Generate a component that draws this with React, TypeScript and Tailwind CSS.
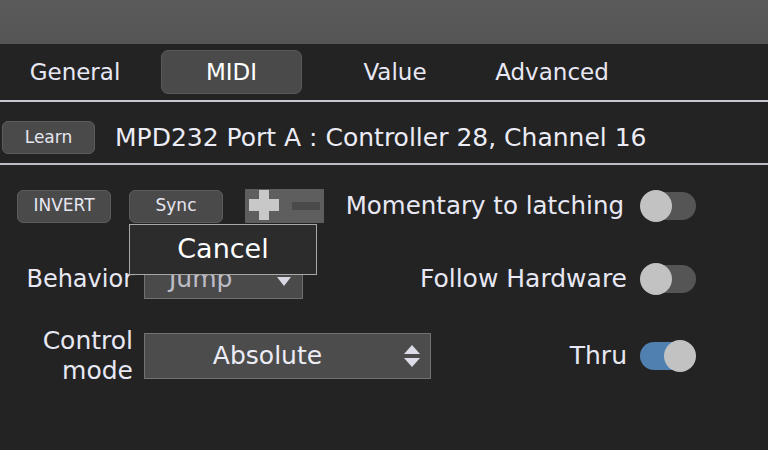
import React from "react";

const font = { fontFamily: '"DejaVu Sans", "Liberation Sans", sans-serif' };

function Toggle({ on }: { on?: boolean }) {
  return (
    <div className="relative w-[56px] h-[32px] shrink-0">
      <div
        className={`absolute top-[2px] h-[28px] w-[48px] rounded-full ${
          on ? "left-0 bg-[#4f80b0]" : "left-[8px] bg-[#555555]"
        }`}
      />
      <div
        className={`absolute top-0 h-[32px] w-[32px] rounded-full bg-[#c2c2c2] ${
          on ? "left-[24px]" : "left-0"
        }`}
      />
    </div>
  );
}

function SmallButton({ label, className = "" }: { label: string; className?: string }) {
  return (
    <div
      className={`flex items-center justify-center h-[33px] rounded-[6px] bg-[#4a4a4a] border border-[#5c5c5c] text-[17px] text-[#e6e6f0] ${className}`}
    >
      {label}
    </div>
  );
}

export default function App() {
  return (
    <div className="w-[768px] h-[450px] overflow-hidden bg-[#232323] relative" style={font}>
      {/* top bar */}
      <div className="h-[44px] bg-gradient-to-b from-[#5a5a5a] to-[#555555]" />

      {/* tabs */}
      <div className="h-[56px] flex items-center text-[23px] text-[#e8e8f4]">
        <div className="w-[150px] text-center">General</div>
        <div className="ml-[11px] w-[141px] h-[44px] flex items-center justify-center rounded-[7px] bg-[#4a4a4a] border border-[#585858] text-white">
          MIDI
        </div>
        <div className="ml-[33px] w-[120px] text-center">Value</div>
        <div className="ml-[27px] w-[140px] text-center">Advanced</div>
      </div>
      <div className="h-[2px] bg-[#c8c8d2]" />

      {/* source row */}
      <div className="h-[61px] flex items-center pl-[2px] pt-[10px]">
        <SmallButton label="Learn" className="w-[93px]" />
        <div className="ml-[20px] text-[25px] text-[#ececf6] whitespace-nowrap">
          MPD232 Port A : Controller 28, Channel 16
        </div>
      </div>
      <div className="h-[2px] bg-[#bdbdc4]" />

      {/* options */}
      <div className="flex items-center mt-[24px] h-[34px]">
        <div className="flex items-center pl-[17px] gap-[18px]">
          <SmallButton label="INVERT" className="w-[94px]" />
          <SmallButton label="Sync" className="w-[94px]" />
          <div className="ml-[4px] w-[79px] h-[34px] bg-[#5e5e5e] relative">
            <div className="absolute left-[4px] top-[10px] w-[30px] h-[12px] bg-[#c8c8c8]" />
            <div className="absolute left-[14px] top-[1px] w-[10px] h-[30px] bg-[#c8c8c8]" />
            <div className="absolute left-[47px] top-[13px] w-[28px] h-[8px] bg-[#4a4a4a]" />
          </div>
        </div>
        <div className="flex-1 flex items-center justify-end pr-[72px] gap-[16px]">
          <span className="text-[24.5px] text-[#e8e8f4] whitespace-nowrap">Momentary to latching</span>
          <Toggle />
        </div>
      </div>

      <div className="flex items-center mt-[36px] h-[40px]">
        <div className="w-[133px] text-right text-[24px] text-[#e8e8f4] whitespace-nowrap">Behavior</div>
        <div className="ml-[11px] w-[159px] h-[40px] bg-[#4a4a4a] border border-[#707070] relative flex items-center">
          <span className="ml-[24px] text-[25px] text-[#bdbdc8]">Jump</span>
          <svg className="absolute right-[11px] top-[17px]" width="14" height="9" viewBox="0 0 14 9">
            <path d="M0 0 H14 L7 9 Z" fill="#d8d8e4" />
          </svg>
        </div>
        <div className="flex-1 flex items-center justify-end pr-[72px] gap-[13px]">
          <span className="text-[25px] text-[#e8e8f4] whitespace-nowrap">Follow Hardware</span>
          <Toggle />
        </div>
      </div>

      <div className="flex items-center mt-[31px] h-[52px]">
        <div className="w-[133px] text-right text-[25px] leading-[30px] text-[#e8e8f4]">
          Control
          <br />
          mode
        </div>
        <div className="ml-[11px] w-[287px] h-[46px] bg-[#4c4c4c] border border-[#727272] relative flex items-center justify-center">
          <span className="text-[25px] text-[#ececf6] -ml-[40px]">Absolute</span>
          <svg className="absolute right-[10px] top-[11px]" width="16" height="22" viewBox="0 0 16 22">
            <path d="M8 0 L16 9 H0 Z" fill="#dcdce8" />
            <path d="M0 13 H16 L8 22 Z" fill="#dcdce8" />
          </svg>
        </div>
        <div className="flex-1 flex items-center justify-end pr-[72px] gap-[13px]">
          <span className="text-[25px] text-[#e8e8f4]">Thru</span>
          <Toggle on />
        </div>
      </div>

      {/* popup */}
      <div className="absolute left-[129px] top-[224px] w-[188px] h-[51px] bg-[#2c2c2c] border border-[#a8a8a8] flex items-center justify-center text-[27px] text-white">
        Cancel
      </div>
    </div>
  );
}
